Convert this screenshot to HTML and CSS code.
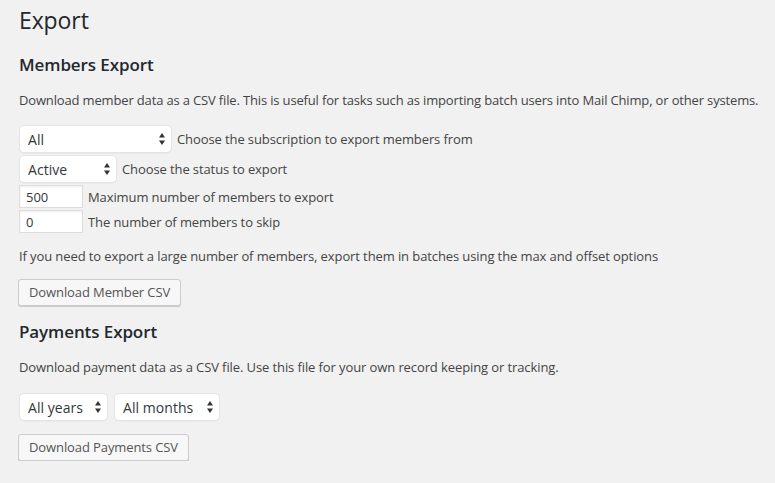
FILE: index.html
```html
<!DOCTYPE html>
<html lang="en">
<head>
<meta charset="utf-8">
<title>Export</title>
<link rel="stylesheet" href="styles.css">
</head>
<body>
<div class="wrap">
  <h1 class="page-title">Export</h1>

  <h2 class="section-title">Members Export</h2>
  <p class="desc first">Download member data as a CSV file. This is useful for tasks such as importing batch users into Mail Chimp, or other systems.</p>

  <div class="fields">
    <div class="field">
      <span class="select-wrap select-sub">
        <select class="select"><option>All</option></select>
        <svg class="arrows" width="6" height="12" viewBox="0 0 6 12"><path d="M3 0 L6 4.5 L0 4.5 Z M0 7.5 L6 7.5 L3 12 Z" fill="#333"/></svg>
      </span>
      <label>Choose the subscription to export members from</label>
    </div>
    <div class="field">
      <span class="select-wrap select-status">
        <select class="select"><option>Active</option></select>
        <svg class="arrows" width="6" height="12" viewBox="0 0 6 12"><path d="M3 0 L6 4.5 L0 4.5 Z M0 7.5 L6 7.5 L3 12 Z" fill="#333"/></svg>
      </span>
      <label>Choose the status to export</label>
    </div>
    <div class="field">
      <input class="text-input" type="text" value="500">
      <label>Maximum number of members to export</label>
    </div>
    <div class="field">
      <input class="text-input" type="text" value="0">
      <label>The number of members to skip</label>
    </div>
  </div>

  <p class="desc note">If you need to export a large number of members, export them in batches using the max and offset options</p>

  <button class="button">Download Member CSV</button>

  <h2 class="section-title second">Payments Export</h2>
  <p class="desc">Download payment data as a CSV file. Use this file for your own record keeping or tracking.</p>

  <div class="date-row">
    <span class="select-wrap select-years">
      <select class="select"><option>All years</option></select>
      <svg class="arrows" width="6" height="12" viewBox="0 0 6 12"><path d="M3 0 L6 4.5 L0 4.5 Z M0 7.5 L6 7.5 L3 12 Z" fill="#333"/></svg>
    </span>
    <span class="select-wrap select-months">
      <select class="select"><option>All months</option></select>
      <svg class="arrows" width="6" height="12" viewBox="0 0 6 12"><path d="M3 0 L6 4.5 L0 4.5 Z M0 7.5 L6 7.5 L3 12 Z" fill="#333"/></svg>
    </span>
  </div>

  <button class="button">Download Payments CSV</button>
</div>
</body>
</html>
```

FILE: styles.css
```css
html, body {
  margin: 0;
  padding: 0;
  background: #f1f1f1;
}

body {
  font-family: "Open Sans", "Liberation Sans", sans-serif;
  font-size: 13px;
  color: #444;
  letter-spacing: -0.1px;
}

.wrap {
  padding: 0 4px 0 18px;
}

.page-title {
  margin: 0;
  padding: 6px 0 0 1px;
  font-size: 23px;
  line-height: 29px;
  font-weight: 400;
  color: #23282d;
}

.section-title {
  margin: 19px 0 0 1px;
  font-size: 17px;
  line-height: 22px;
  font-weight: 600;
  color: #23282d;
}

.section-title.second {
  margin-top: 15px;
}

.desc {
  margin: 14px 0 0 1px;
  line-height: 20px;
  white-space: nowrap;
}

.desc.first {
  letter-spacing: -0.155px;
}

.fields {
  display: flex;
  flex-direction: column;
  margin-top: 14px;
}

.field {
  display: flex;
  align-items: center;
}

.field label {
  margin-left: 4px;
}

.select-wrap {
  position: relative;
  display: inline-block;
  margin: 1px;
}

.select {
  appearance: none;
  -webkit-appearance: none;
  display: block;
  box-sizing: border-box;
  height: 28px;
  margin: 0;
  padding: 0 20px 0 8px;
  font-family: "Open Sans", "Liberation Sans", sans-serif;
  font-size: 14px;
  letter-spacing: 0.05px;
  color: #32373c;
  background: #fff;
  border: 1px solid #e4e4e4;
  border-radius: 5px;
  box-shadow: 0 1px 1px rgba(0, 0, 0, 0.03);
  outline: none;
}

.arrows {
  position: absolute;
  right: 7px;
  top: 8px;
  pointer-events: none;
}

.select-sub .select { width: 153px; }
.select-status .select { width: 98px; }
.select-years .select { width: 89px; }
.select-months .select { width: 106px; }

.text-input {
  box-sizing: border-box;
  width: 64px;
  height: 23px;
  margin: 1px;
  padding: 0 6px;
  font-family: "Open Sans", "Liberation Sans", sans-serif;
  font-size: 13px;
  color: #32373c;
  background: #fff;
  border: 1px solid #ddd;
  border-radius: 0;
  box-shadow: inset 0 1px 2px rgba(0, 0, 0, 0.07);
  outline: none;
}

.note {
  margin-top: 12px;
}

.button {
  display: block;
  box-sizing: border-box;
  height: 27px;
  margin: 13px 0 0 0;
  padding: 0 10px 1px;
  font-family: "Open Sans", "Liberation Sans", sans-serif;
  font-size: 13px;
  letter-spacing: -0.1px;
  color: #555;
  background: #f7f7f7;
  border: 1px solid #ccc;
  border-radius: 3px;
  box-shadow: 0 1px 0 #ccc;
  cursor: pointer;
}

.date-row {
  display: flex;
  gap: 4px;
  margin-top: 15px;
}

.date-row + .button {
  margin-top: 12px;
}
```
